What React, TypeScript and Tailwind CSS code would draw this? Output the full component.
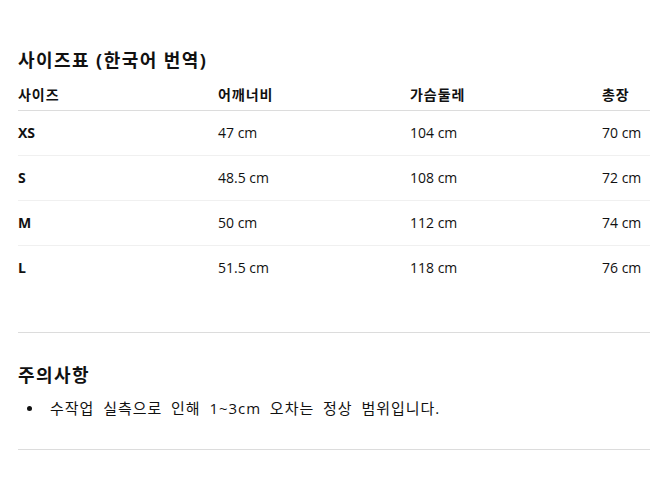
const ROWS = [
  { size: 'XS', shoulder: '47 cm', chest: '104 cm', length: '70 cm' },
  { size: 'S', shoulder: '48.5 cm', chest: '108 cm', length: '72 cm' },
  { size: 'M', shoulder: '50 cm', chest: '112 cm', length: '74 cm' },
  { size: 'L', shoulder: '51.5 cm', chest: '118 cm', length: '76 cm' },
];

const cols = 'grid grid-cols-[200px_192px_192px_1fr]';

export default function App() {
  return (
    <div
      className="bg-white min-h-[478px] pl-[18px] pt-[46px] text-[#111] tracking-[0.06em]"
      style={{ fontFamily: '"Open Sans", "Noto Sans CJK KR", sans-serif' }}
    >
      {/* 사이즈표 */}
      <h2 className="text-[18px] leading-[28px] font-bold tracking-[0.08em]">사이즈표 (한국어 번역)</h2>
      <div className="mt-[6px]">
        <div className={`${cols} border-b border-[#dcdcdc] text-[14px] leading-[20px] font-semibold py-[5px]`}>
          <div>사이즈</div>
          <div>어깨너비</div>
          <div>가슴둘레</div>
          <div>총장</div>
        </div>
        {ROWS.map((r, i) => (
          <div
            key={r.size}
            className={`${cols} text-[14px] leading-[20px] py-[12px] tracking-normal ${
              i < ROWS.length - 1 ? 'border-b border-[#f0f0f0]' : ''
            }`}
          >
            <div className="font-bold">{r.size}</div>
            <div>{r.shoulder}</div>
            <div>{r.chest}</div>
            <div>{r.length}</div>
          </div>
        ))}
      </div>

      <hr className="mt-[42px] border-t border-[#dcdcdc]" />

      {/* 주의사항 */}
      <h2 className="mt-[28px] text-[18px] leading-[28px] font-bold tracking-[0.08em]">주의사항</h2>
      <ul className="mt-[7px] pl-[9px] text-[15px] leading-[24px] [word-spacing:4px]">
        <li className="flex items-center gap-[18px]">
          <span className="w-[5px] h-[5px] rounded-full bg-[#111] shrink-0" />
          <span>수작업 실측으로 인해 1~3cm 오차는 정상 범위입니다.</span>
        </li>
      </ul>

      <hr className="mt-[29px] border-t border-[#dcdcdc]" />
    </div>
  );
}
